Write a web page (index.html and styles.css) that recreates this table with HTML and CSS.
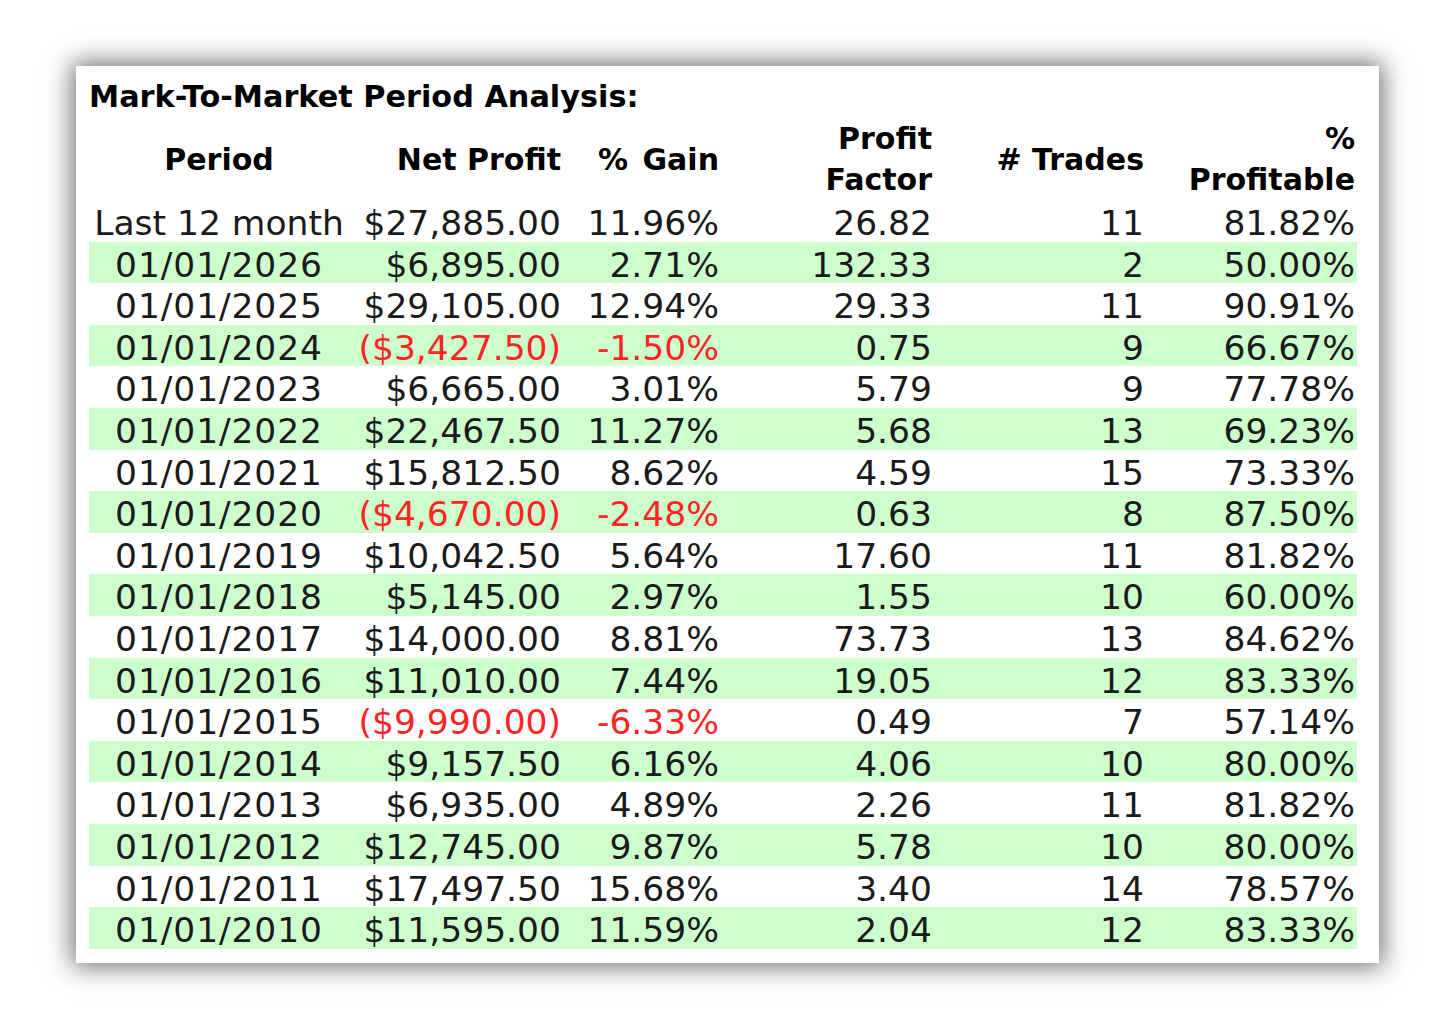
FILE: index.html
```html
<!DOCTYPE html>
<html>
<head>
<meta charset="utf-8">
<link rel="stylesheet" href="styles.css">
</head>
<body>
<div class="card">
  <div class="title">Mark-To-Market Period Analysis:</div>
  <table class="grid">
    <colgroup>
      <col class="c1"><col class="c2"><col class="c3"><col class="c4"><col class="c5"><col class="c6">
    </colgroup>
    <thead>
      <tr>
        <th class="ctr">Period</th>
        <th>Net Profit</th>
        <th class="gain">% Gain</th>
        <th>Profit<br>Factor</th>
        <th># Trades</th>
        <th>%<br>Profitable</th>
      </tr>
    </thead>
    <tbody>
      <tr><td class="ctr">Last 12 month</td><td>$27,885.00</td><td>11.96%</td><td>26.82</td><td>11</td><td>81.82%</td></tr>
      <tr class="alt"><td class="ctr date">01/01/2026</td><td>$6,895.00</td><td>2.71%</td><td>132.33</td><td>2</td><td>50.00%</td></tr>
      <tr><td class="ctr date">01/01/2025</td><td>$29,105.00</td><td>12.94%</td><td>29.33</td><td>11</td><td>90.91%</td></tr>
      <tr class="alt"><td class="ctr date">01/01/2024</td><td class="neg">($3,427.50)</td><td class="neg">-1.50%</td><td>0.75</td><td>9</td><td>66.67%</td></tr>
      <tr><td class="ctr date">01/01/2023</td><td>$6,665.00</td><td>3.01%</td><td>5.79</td><td>9</td><td>77.78%</td></tr>
      <tr class="alt"><td class="ctr date">01/01/2022</td><td>$22,467.50</td><td>11.27%</td><td>5.68</td><td>13</td><td>69.23%</td></tr>
      <tr><td class="ctr date">01/01/2021</td><td>$15,812.50</td><td>8.62%</td><td>4.59</td><td>15</td><td>73.33%</td></tr>
      <tr class="alt"><td class="ctr date">01/01/2020</td><td class="neg">($4,670.00)</td><td class="neg">-2.48%</td><td>0.63</td><td>8</td><td>87.50%</td></tr>
      <tr><td class="ctr date">01/01/2019</td><td>$10,042.50</td><td>5.64%</td><td>17.60</td><td>11</td><td>81.82%</td></tr>
      <tr class="alt"><td class="ctr date">01/01/2018</td><td>$5,145.00</td><td>2.97%</td><td>1.55</td><td>10</td><td>60.00%</td></tr>
      <tr><td class="ctr date">01/01/2017</td><td>$14,000.00</td><td>8.81%</td><td>73.73</td><td>13</td><td>84.62%</td></tr>
      <tr class="alt"><td class="ctr date">01/01/2016</td><td>$11,010.00</td><td>7.44%</td><td>19.05</td><td>12</td><td>83.33%</td></tr>
      <tr><td class="ctr date">01/01/2015</td><td class="neg">($9,990.00)</td><td class="neg">-6.33%</td><td>0.49</td><td>7</td><td>57.14%</td></tr>
      <tr class="alt"><td class="ctr date">01/01/2014</td><td>$9,157.50</td><td>6.16%</td><td>4.06</td><td>10</td><td>80.00%</td></tr>
      <tr><td class="ctr date">01/01/2013</td><td>$6,935.00</td><td>4.89%</td><td>2.26</td><td>11</td><td>81.82%</td></tr>
      <tr class="alt"><td class="ctr date">01/01/2012</td><td>$12,745.00</td><td>9.87%</td><td>5.78</td><td>10</td><td>80.00%</td></tr>
      <tr><td class="ctr date">01/01/2011</td><td>$17,497.50</td><td>15.68%</td><td>3.40</td><td>14</td><td>78.57%</td></tr>
      <tr class="alt"><td class="ctr date">01/01/2010</td><td>$11,595.00</td><td>11.59%</td><td>2.04</td><td>12</td><td>83.33%</td></tr>
    </tbody>
  </table>
</div>
</body>
</html>
```

FILE: styles.css
```css
html, body {
  margin: 0;
  padding: 0;
  background: #ffffff;
}
body {
  font-family: "DejaVu Sans", Verdana, sans-serif;
  color: #111;
  padding-bottom: 57px;
}
.card {
  margin: 66px 0 0 76px;
  width: 1303px;
  height: 897px;
  box-sizing: border-box;
  padding: 10px 22px 0 13px;
  background: #fff;
  box-shadow: 0 0 24px 4px rgba(0, 0, 0, 0.55);
}
.title {
  font-weight: bold;
  font-size: 30.3px;
  line-height: 42px;
  color: #000;
}
.grid {
  border-collapse: collapse;
  border-spacing: 0;
  table-layout: fixed;
  width: 1268px;
}
.c1 { width: 260px; }
.c2 { width: 214px; }
.c3 { width: 158px; }
.c4 { width: 213px; }
.c5 { width: 212px; }
.c6 { width: 211px; }
.grid th {
  font-size: 30px;
  font-weight: bold;
  color: #000;
  line-height: 41px;
  padding: 0 2px;
  text-align: right;
  vertical-align: middle;
  white-space: nowrap;
}
.grid th.gain {
  word-spacing: 4px;
}
.grid td {
  font-size: 34.5px;
  line-height: 35.6px;
  padding: 6px 2px 0;
  text-align: right;
  white-space: nowrap;
  color: #1a1a1a;
}
.grid .ctr {
  text-align: center;
}
.grid td.date {
  letter-spacing: 0.9px;
}
.grid tr.alt td {
  background: #ccffcc;
}
.grid td.neg {
  color: #ff2424;
}
```
